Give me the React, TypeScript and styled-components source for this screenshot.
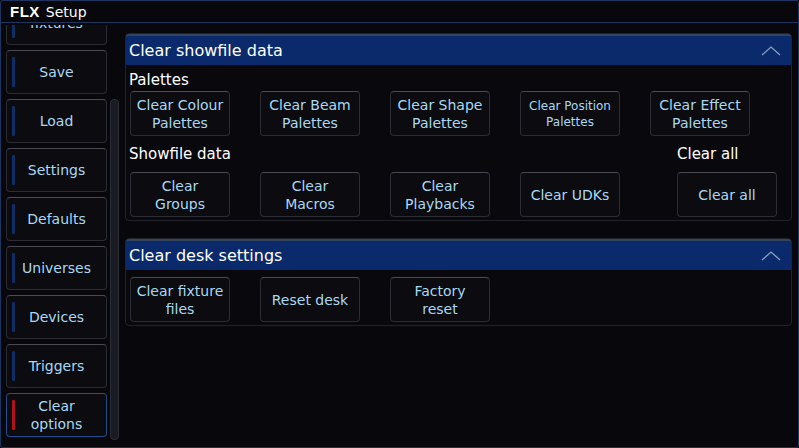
import React from "react";
import styled, { createGlobalStyle } from "styled-components";

const G = createGlobalStyle`
  html,body{margin:0;padding:0;background:#07070c;}
  body{width:799px;height:448px;overflow:hidden;font-family:"DejaVu Sans",Verdana,sans-serif;}
`;
const Win = styled.div`
  width:799px;height:448px;box-sizing:border-box;display:flex;flex-direction:column;
  border:1px solid #1c3560;border-radius:3px;background:#07070c;
`;
const Title = styled.div`
  height:21px;flex-shrink:0;display:flex;align-items:center;gap:6px;padding-left:9px;color:#fff;font-size:14px;
  border-bottom:1px solid #1c3560;
`;
const Logo = styled.span`font-weight:bold;letter-spacing:0.5px;font-size:15px;font-family:"Liberation Sans",sans-serif;`;
const Body = styled.div`flex:1;display:flex;padding:2px 0 7px 5px;min-height:0;`;
const SideWrap = styled.div`width:101px;overflow:hidden;`;
const SideInner = styled.div`display:flex;flex-direction:column;gap:5px;margin-top:-24px;`;
const SideBtn = styled.div<{ $active?: boolean }>`
  position:relative;height:44px;flex-shrink:0;box-sizing:border-box;border-radius:4px;
  border:1px solid ${p => p.$active ? "#1d4d8a" : "#2c2c34"};border-top-color:#4a4a55;
  background:#0b0b10;color:#a9d9f2;font-size:14px;display:flex;align-items:center;justify-content:center;
  text-align:center;line-height:18px;
  &::before{content:"";position:absolute;left:5px;top:6px;bottom:6px;width:3px;border-radius:1px;
    background:${p => p.$active ? "#b0121a" : "#0f2e66"};}
`;
const Scroll = styled.div`
  width:7px;margin:74px 0 0 3px;border-radius:4px;background:#1a1a22;border:1px solid #2d2d36;
`;
const Main = styled.div`flex:1;display:flex;flex-direction:column;gap:17px;padding:8px 6px 0 6px;`;
const Panel = styled.div`
  border:1px solid #22222a;border-radius:4px;background:#08080d;padding-bottom:3px;
`;
const Head = styled.div`
  height:29px;background:#0a2a6c;border-top:2px solid #33445f;border-radius:3px 3px 0 0;
  display:flex;align-items:center;justify-content:space-between;padding:0 10px 0 3px;
  color:#fff;font-size:16px;
`;
const Section = styled.div`display:flex;flex-direction:column;padding:0 4px 0 3px;`;
const Label = styled.div`color:#fff;font-size:15px;height:22px;display:flex;align-items:center;margin-top:4px;`;
const Row = styled.div`display:flex;gap:30px;padding-left:1px;`;
const Btn = styled.div<{ $small?: boolean }>`
  width:100px;height:45px;box-sizing:border-box;border-radius:4px;border:1px solid #2c2c34;
  border-top-color:#4a4a55;background:#0b0b10;color:#a9d9f2;
  font-size:${p => p.$small ? "12px" : "14px"};line-height:${p => p.$small ? "16px" : "18px"};
  display:flex;align-items:center;justify-content:center;text-align:center;
`;
const Split = styled.div`display:flex;justify-content:space-between;align-items:flex-end;`;
const Col = styled.div`display:flex;flex-direction:column;align-items:flex-start;`;

const Chev = () => (
  <svg width="20" height="10" viewBox="0 0 20 10"><path d="M1 9 L10 1 L19 9" fill="none" stroke="#8aa0c0" strokeWidth="1.3" /></svg>
);

export default function App() {
  const side = ["fixtures", "Save", "Load", "Settings", "Defaults", "Universes", "Devices", "Triggers"];
  return (
    <Win>
      <G />
      <Title><Logo>FLX</Logo>Setup</Title>
      <Body>
        <SideWrap>
          <SideInner>
            {side.map(s => <SideBtn key={s}>{s}</SideBtn>)}
            <SideBtn $active>Clear<br />options</SideBtn>
          </SideInner>
        </SideWrap>
        <Scroll />
        <Main>
          <Panel>
            <Head>Clear showfile data<Chev /></Head>
            <Section>
              <Label>Palettes</Label>
              <Row>
                <Btn>Clear Colour<br />Palettes</Btn>
                <Btn>Clear Beam<br />Palettes</Btn>
                <Btn>Clear Shape<br />Palettes</Btn>
                <Btn $small>Clear Position<br />Palettes</Btn>
                <Btn>Clear Effect<br />Palettes</Btn>
              </Row>
              <Split>
                <Col>
                  <Label style={{ marginTop: 7 }}>Showfile data</Label>
                  <Row style={{ marginTop: 7 }}>
                    <Btn>Clear<br />Groups</Btn>
                    <Btn>Clear<br />Macros</Btn>
                    <Btn>Clear<br />Playbacks</Btn>
                    <Btn>Clear UDKs</Btn>
                  </Row>
                </Col>
                <Col style={{ marginRight: 10 }}>
                  <Label>Clear all</Label>
                  <Btn style={{ marginTop: 7 }}>Clear all</Btn>
                </Col>
              </Split>
            </Section>
          </Panel>
          <Panel>
            <Head>Clear desk settings<Chev /></Head>
            <Section style={{ paddingTop: 7 }}>
              <Row>
                <Btn>Clear fixture<br />files</Btn>
                <Btn>Reset desk</Btn>
                <Btn>Factory<br />reset</Btn>
              </Row>
            </Section>
          </Panel>
        </Main>
      </Body>
    </Win>
  );
}
